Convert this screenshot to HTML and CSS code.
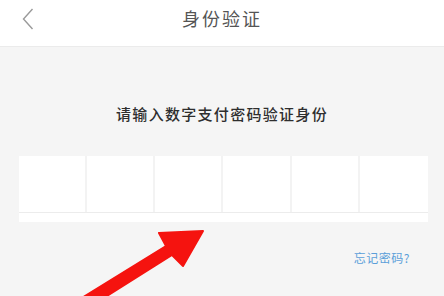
FILE: index.html
```html
<!DOCTYPE html>
<html lang="zh-CN">
<head>
    <meta charset="UTF-8">
    <meta name="viewport" content="width=device-width, initial-scale=1.0">
    <title>身份验证</title>
    <link rel="stylesheet" href="styles.css">
</head>
<body>
    <header class="top-bar">
        <div class="back">
            <svg width="12" height="22" viewBox="0 0 12 22">
                <polyline points="10.5,1 1.5,11 10.5,21" fill="none" stroke="#9a9a9a" stroke-width="1.4"/>
            </svg>
        </div>
        <h1 class="title">身份验证</h1>
        <div></div>
    </header>

    <main class="content">
        <p class="tip">请输入数字支付密码验证身份</p>
        <div class="pin-box">
            <div class="pin-row">
                <div class="pin-cell"></div>
                <div class="pin-cell"></div>
                <div class="pin-cell"></div>
                <div class="pin-cell"></div>
                <div class="pin-cell"></div>
                <div class="pin-cell"></div>
            </div>
        </div>
        <div class="forgot-row">
            <a class="forgot" href="#">忘记密码?</a>
        </div>
    </main>

    <!-- 标注箭头 -->
    <svg class="arrow" width="444" height="296" viewBox="0 0 444 296">
        <polygon points="77,301 166,246 159,233 203,231 183,266 172,255 83,311"
                 fill="#f5130f" stroke="#f5130f" stroke-width="2" stroke-linejoin="round"/>
    </svg>
</body>
</html>
```

FILE: styles.css
```css
body {
    margin: 0;
    padding: 0;
    background-color: #f5f5f5;
    font-family: 'Noto Sans CJK SC', 'Noto Sans', sans-serif;
    color: #333;
    overflow: hidden;
}
.top-bar {
    height: 46px;
    background-color: #fff;
    border-bottom: 1px solid #ebebeb;
    display: grid;
    grid-template-columns: 1fr auto 1fr;
    align-items: start;
}
.back {
    padding: 8px 0 0 22px;
    line-height: 0;
}
.title {
    margin: 0;
    font-size: 18px;
    font-weight: normal;
    line-height: 36px;
    letter-spacing: 2px;
    color: #555;
}
.content {
    padding-top: 57px;
}
.tip {
    margin: 0;
    text-align: center;
    font-size: 15px;
    line-height: 20px;
    letter-spacing: 1.3px;
    color: #2e2e2e;
    font-weight: 500;
}
.pin-box {
    margin: 32px 16px 0 19px;
    background-color: #fff;
    height: 66px;
}
.pin-row {
    display: grid;
    grid-template-columns: repeat(6, 1fr);
    height: 56px;
    border-bottom: 1px solid #ececec;
}
.pin-cell {
    border-right: 2px solid #f3f3f3;
}
.pin-cell:last-child {
    border-right: none;
}
.forgot-row {
    display: flex;
    justify-content: flex-end;
    padding: 28px 34px 0 0;
}
.forgot {
    font-size: 12px;
    line-height: 16px;
    letter-spacing: 0.5px;
    color: #5b9fd9;
    text-decoration: none;
}
.arrow {
    position: absolute;
    left: 0;
    top: 0;
    pointer-events: none;
}
```
